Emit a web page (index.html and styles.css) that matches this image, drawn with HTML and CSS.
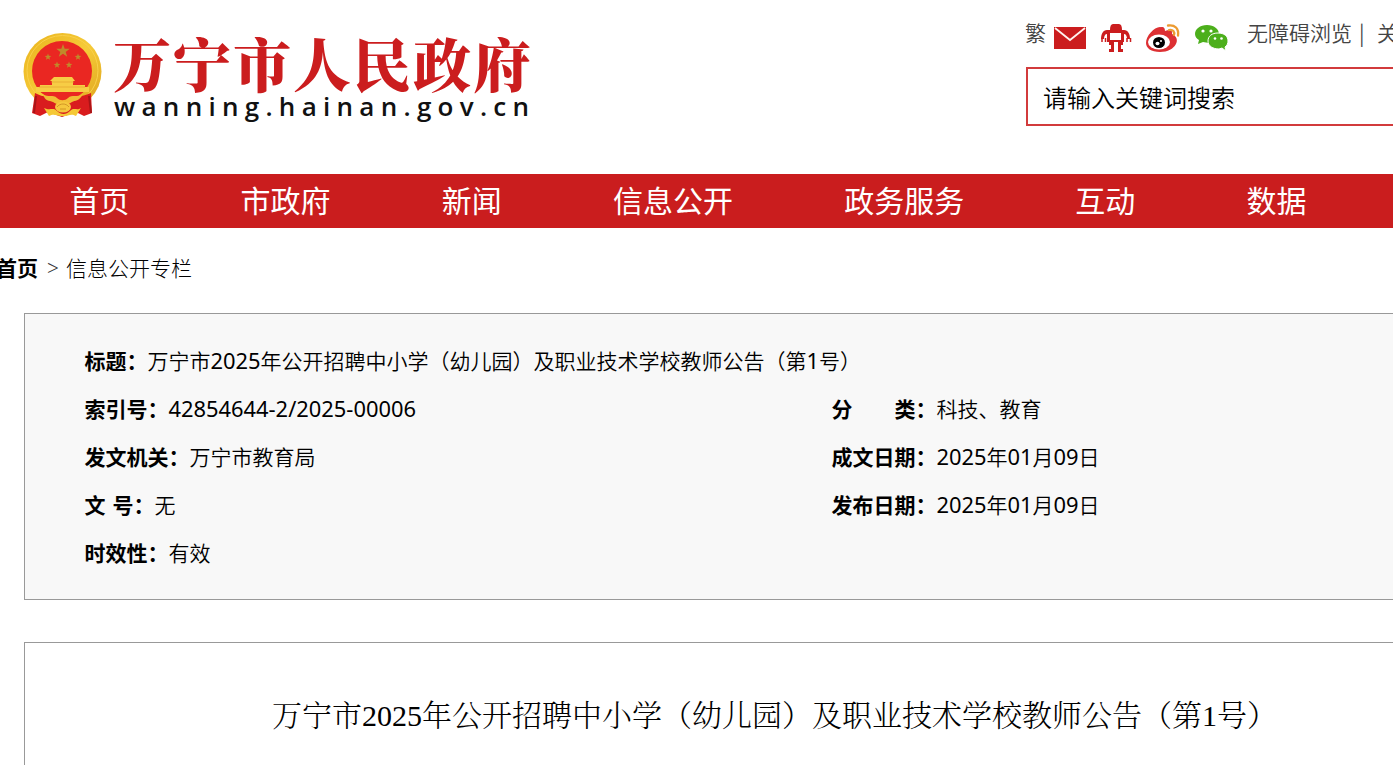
FILE: index.html
```html
<!DOCTYPE html>
<html lang="zh-CN">
<head>
<meta charset="utf-8">
<title>万宁市人民政府</title>
<link rel="stylesheet" href="styles.css">
</head>
<body>
<header class="header">
  <svg class="logo" width="520" height="100" viewBox="20 28 520 100" role="img" aria-label="万宁市人民政府">
    <defs>
      <linearGradient id="gold" x1="0" y1="0" x2="1" y2="1"><stop offset="0" stop-color="#e9b31d"/><stop offset=".5" stop-color="#f6cb38"/><stop offset="1" stop-color="#dda21c"/></linearGradient>
      <path id="star" d="M0-7 1.7-2.3 6.7-2.2 2.7.9 4.2 5.7 0 2.8-4.2 5.7-2.7.9-6.7-2.2-1.7-2.3Z"/>
    </defs>
    <ellipse cx="62.500" cy="71.500" rx="39" ry="38.500" fill="url(#gold)"/>
    <ellipse cx="62.500" cy="70.500" rx="35.500" ry="35" fill="none" stroke="#fad04a" stroke-width="1"/>
    <ellipse cx="62" cy="71" rx="30" ry="30" fill="#ea2722"/>
    <path d="M35 93c9 5 15 3 19 7l8 7 8-7c5-4 12-3 21-7l1 20-8 3-8-4-14 5-14-5-8 4-8-3Z" fill="#d91c1e"/>
    <path d="M36 96 34 113M89 96 91 113" stroke="#a81517" stroke-width="2"/>
    <g fill="#c08a2a"><use href="#star" x="63" y="51"/><use href="#star" transform="translate(48 57)scale(.5)"/><use href="#star" transform="translate(78 57)scale(.5)"/><use href="#star" transform="translate(57 65)scale(.5)"/><use href="#star" transform="translate(69 65)scale(.5)"/></g>
    <path d="M54 77h18l3 4h-2v4h12v2h4v5H36v-5h4v-2h12v-4h-2Z" fill="#f7cd45"/>
    <path d="M39 87h46M51 82h23" stroke="#e3a52c" stroke-width=".7"/>
    <path d="M43 94c5 4 10 0 14 4 3 3 8 3 11 0 4-4 9 0 15-4-4 8-8 6-11 8-5 4-14 4-19 0-4-2-8 0-10-8Z" fill="#f1bd35"/>
    <ellipse cx="63" cy="107" rx="8" ry="5.500" fill="#f6c73d"/>
    <path d="M57 107c3-4 9-4 12 0M60 109h6" fill="none" stroke="#c98a20" stroke-width=".8"/>
    <path d="M44 108c6 3 9-1 13 3s9 4 13 0 7 0 11-3l-5 8c-5-3-7 0-13 0s-9-3-14 0Z" fill="#f5c936"/>
    <text class="logo-cn" x="113" y="86.500">万宁市人民政府</text>
    <text class="logo-en" x="114" y="115.500" textLength="415" lengthAdjust="spacing">wanning.hainan.gov.cn</text>
  </svg>
  <div class="tools">
    <div class="toolbar">
      <span class="trad">繁</span>
      <svg class="icons" width="180" height="32" viewBox="1052 22 180 32" aria-hidden="true">
        <path fill="#cb1d1e" d="M1054 27h32v22h-32z"/><path d="m1055 28 15 12 15-12" fill="none" stroke="#fff4ef" stroke-width="1.800"/>
        <g fill="#cb1d1e"><path d="M1110 30c0-4 1-6 3-6h6c2 0 3 2 3 6Z"/><path d="M1107 30h17c4 0 6 4 6 9h-3c0-3-1-5-3-5v8h-17v-8c-2 0-3 2-3 5h-3c0-5 2-9 6-9Z"/><path d="M1109 42h5v10h-5v-3h2v-4h-2ZM1118 42h5v3h-2v4h2v3h-5Z"/><path fill="#fff" d="M1110 33h11v7h-11z"/></g>
        <path d="M1102 38v4m3.500-4v4M1127 38v4m3.500-4v4" stroke="#cb1d1e" stroke-width="1.500"/>
        <path d="M1158 30c3-4 7-4 7 1 5-2 8-1 7 3 10 4 4 18-12 18-9 0-14-4-14-9 0-7 8-16 14-16 4 0 3 3 3 4Z" fill="#dd3033"/>
        <ellipse cx="1159" cy="42" rx="11" ry="7.600" fill="#fff"/><ellipse cx="1159" cy="42.500" rx="6" ry="5.600"/><ellipse cx="1157.500" cy="43.500" rx="2" ry="1.700" fill="#fff"/><circle cx="1161" cy="41" r="1" fill="#fff"/>
        <path d="M1168 25.500c7-1 11 3 10 10M1169 30c4-1 6 2 5 5" fill="none" stroke="#ec9b31" stroke-width="2.300" stroke-linecap="round"/>
        <path d="M1207 25c-7 0-12 4-12 9 0 3 2 5 4 6l-1 4 5-2 6 1c7 0 10-4 10-9s-5-9-12-9Z" fill="#4caf1b"/>
        <path d="M1218 33c-6 0-10 3-10 8s5 8 11 8l3-1 4 3-1-4c2-1 3-4 3-6 0-5-4-8-10-8Z" fill="#4caf1b" stroke="#fff"/>
        <g fill="#fff"><circle cx="1203" cy="31" r="1.600"/><circle cx="1211" cy="31" r="1.600"/><circle cx="1215" cy="38.500" r="1.300"/><circle cx="1221.500" cy="38.500" r="1.300"/></g>
      </svg>
      <span class="access">无障碍浏览</span><span class="bar">|</span><span>关</span>
    </div>
    <div class="search">请输入关键词搜索</div>
  </div>
</header>
<nav class="nav"><a>首页</a><a>市政府</a><a>新闻</a><a>信息公开</a><a>政务服务</a><a>互动</a><a>数据</a></nav>
<div class="crumbs"><b>首页</b><span class="arrow">&gt;</span><span>信息公开专栏</span></div>
<section class="meta">
  <div class="wide"><b>标题：</b>万宁市<span class="num">2025</span>年公开招聘中小学（幼儿园）及职业技术学校教师公告（第<span class="num">1</span>号）</div>
  <div><b>索引号：</b><span class="num">42854644-2/2025-00006</span></div>
  <div><b>分　　类：</b>科技、教育</div>
  <div><b>发文机关：</b>万宁市教育局</div>
  <div><b>成文日期：</b><span class="num">2025</span>年<span class="num">01</span>月<span class="num">09</span>日</div>
  <div><b>文<span class="gap"></span>号：</b>无</div>
  <div><b>发布日期：</b><span class="num">2025</span>年<span class="num">01</span>月<span class="num">09</span>日</div>
  <div><b>时效性：</b>有效</div>
</section>
<article class="article"><h1>万宁市2025年公开招聘中小学（幼儿园）及职业技术学校教师公告（第1号）</h1></article>
</body>
</html>
```
FILE: styles.css
```css
* { box-sizing: border-box; }
body {
  margin: 0;
  width: 1393px;
  height: 765px;
  overflow: hidden;
  background: #fff;
  color: #000;
  font-family: "Noto Sans CJK SC", sans-serif;
  font-size: 21px;
  font-weight: 350;
}
.header { display: flex; justify-content: space-between; height: 174px; overflow: hidden; }
.logo { margin: 28px 0 0 20px; }
.logo-cn {
  fill: #cb1d1e;
  font-family: "Noto Serif CJK SC", "Noto Sans CJK SC", serif;
  font-size: 58px;
  font-weight: 900;
  letter-spacing: 2px;
}
.logo-en { fill: #111; font-family: "Open Sans", sans-serif; font-size: 26px; font-weight: 600; }
.tools { width: 368px; flex: none; }
.toolbar { display: flex; height: 67px; line-height: 32px; padding-top: 16px; white-space: nowrap; color: #444; overflow: hidden; }
.icons { margin: 6px 0 0 6px; flex: none; }
.trad { width: 21px; }
.access { margin-left: 15px; }
.bar { width: 13px; margin: 0 7px 0 5px; padding-left: 2px; }
.toolbar > span { flex: none; }
.search {
  margin-left: 1px;
  height: 59px;
  border: 2px solid #d23b3c;
  border-right: 0;
  line-height: 56px;
  padding-left: 15px;
  font-size: 24px;
  font-weight: 350;
}
.nav {
  display: flex;
  gap: 111.2px;
  height: 54px;
  padding-left: 69.4px;
  background: #ca1d1e;
  color: #fff;
  font-size: 30px;
  font-weight: 400;
  line-height: 50px;
  white-space: nowrap;
}
.crumbs { display: flex; height: 85px; line-height: 78px; margin-left: -4px; white-space: nowrap; }
.crumbs span { font-weight: 300; }
.crumbs .arrow { width: 12px; margin: 0 7px 0 9px; font-family: "Liberation Serif", serif; color: #333; line-height: 81px; }
b { font-weight: 700; }
.meta {
  display: grid;
  grid-template-columns: 747px 1fr;
  grid-auto-rows: 48px;
  height: 287px;
  margin-left: 24px;
  padding: 22px 0 0 59.4px;
  border: 1px solid #999;
  border-right: 0;
  background: #f8f8f8;
  line-height: 48px;
  white-space: nowrap;
}
.wide { grid-column: 1 / 3; }
.num { font-family: "Noto Sans", sans-serif; font-size: 21.9px; font-weight: 400; line-height: 1; }
.gap { display: inline-block; width: 7px; }
.article {
  height: 123px;
  margin: 42px 0 0 24px;
  padding-left: 247px;
  border: 1px solid #999;
  border-width: 1px 0 0 1px;
}
h1 {
  margin: 51px 0 0;
  font-family: "Liberation Serif", "Noto Serif CJK SC", "Noto Sans CJK SC", serif;
  font-size: 30px;
  font-weight: 300;
  line-height: 44px;
  white-space: nowrap;
}
```
